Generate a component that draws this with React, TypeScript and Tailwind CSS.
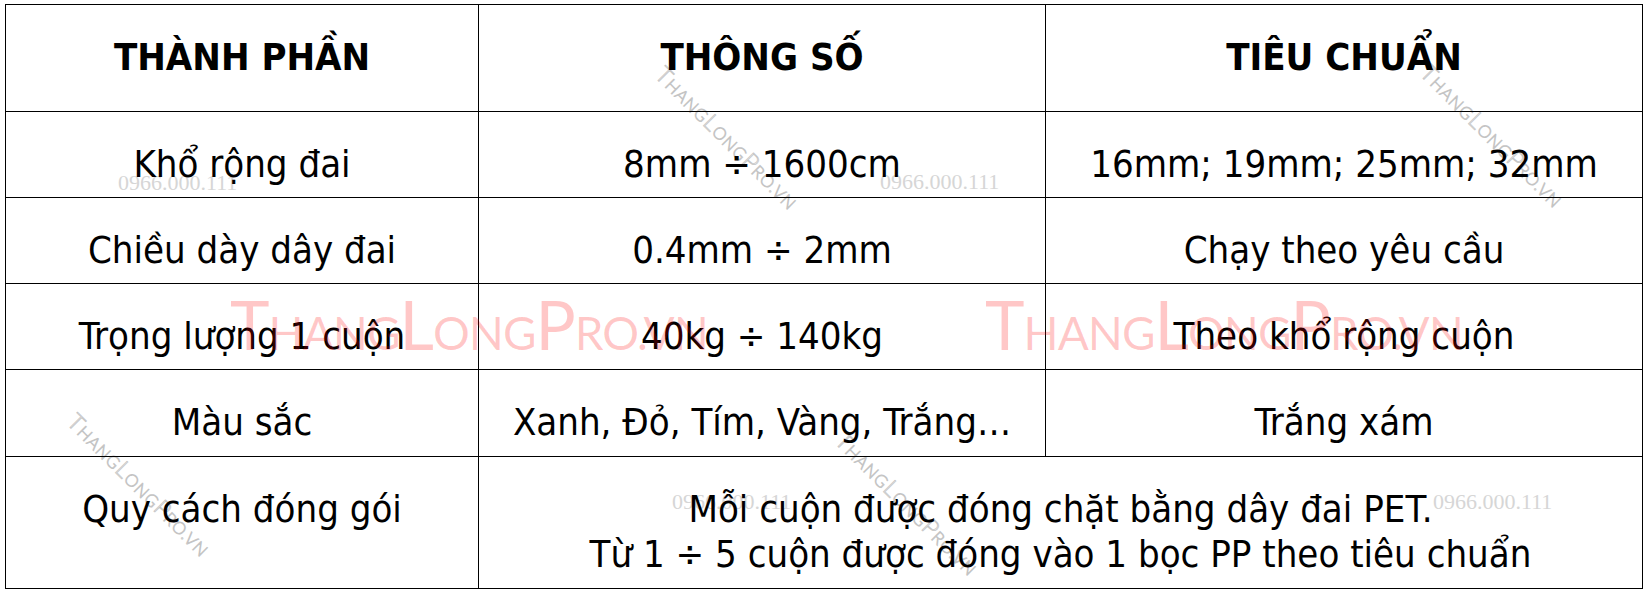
const body = { fontFamily: '"DejaVu Sans Condensed", "DejaVu Sans", sans-serif' }
const mark = { fontFamily: 'Lato, "Open Sans", sans-serif' }
const serif = { fontFamily: '"Liberation Serif", serif' }

const rows = [
  ['Khổ rộng đai', '8mm ÷ 1600cm', '16mm; 19mm; 25mm; 32mm'],
  ['Chiều dày dây đai', '0.4mm ÷ 2mm', 'Chạy theo yêu cầu'],
  ['Trọng lượng 1 cuộn', '40kg ÷ 140kg', 'Theo khổ rộng cuộn'],
  ['Màu sắc', 'Xanh, Đỏ, Tím, Vàng, Trắng…', 'Trắng xám'],
]

const cell = 'border border-black align-top pt-[30px] text-center leading-[45px] whitespace-nowrap'

function BrandMark() {
  return (
    <>
      <span className="text-[67px]">T</span>
      <span className="text-[46px]">HANG</span>
      <span className="text-[67px]">L</span>
      <span className="text-[46px]">ONG</span>
      <span className="text-[67px]">P</span>
      <span className="text-[46px]">RO.VN</span>
    </>
  )
}

function SmallMark() {
  return (
    <>
      <span className="text-[23px]">T</span>
      <span className="text-[17px]">HANG</span>
      <span className="text-[23px]">L</span>
      <span className="text-[17px]">ONG</span>
      <span className="text-[23px]">P</span>
      <span className="text-[17px]">RO.VN</span>
    </>
  )
}

const phones = [
  'left-[113px] top-[168px]',
  'left-[875px] top-[167px]',
  'left-[667px] top-[487px]',
  'left-[1428px] top-[487px]',
]

const diagonals = [
  'left-[663px] top-[58px]',
  'left-[1428px] top-[56px]',
  'left-[75px] top-[405px]',
  'left-[843px] top-[424px]',
]

export default function App() {
  return (
    <div className="min-h-[590px] bg-white pl-[5px] pt-[4px]">
      <div className="relative w-[1637px]">
        {phones.map((p) => (
          <div
            key={p}
            className={`absolute ${p} text-[22px] leading-none text-[#d6d6d6]`}
            style={serif}
          >
            0966.000.111
          </div>
        ))}
        {diagonals.map((p) => (
          <div
            key={p}
            className={`absolute ${p} origin-top-left rotate-[45deg] whitespace-nowrap leading-none font-light tracking-[1px] text-transparent [-webkit-text-stroke:0.8px_#c4c4c4]`}
            style={mark}
          >
            <SmallMark />
          </div>
        ))}

        <table className="relative w-[1637px] table-fixed border-collapse text-[38px] text-black" style={body}>
          <colgroup>
            <col className="w-[473px]" />
            <col className="w-[567px]" />
            <col className="w-[597px]" />
          </colgroup>
          <thead>
            <tr className="h-[107px]">
              <th className={`${cell} font-bold`}>THÀNH PHẦN</th>
              <th className={`${cell} font-bold`}>THÔNG SỐ</th>
              <th className={`${cell} font-bold`}>TIÊU CHUẨN</th>
            </tr>
          </thead>
          <tbody>
            {rows.map((r, i) => (
              <tr key={r[0]} className={i === 3 ? 'h-[87px]' : 'h-[86px]'}>
                {r.map((t) => (
                  <td key={t} className={`${cell} font-normal`}>
                    {t}
                  </td>
                ))}
              </tr>
            ))}
            <tr className="h-[132px]">
              <td className={cell}>Quy cách đóng gói</td>
              <td colSpan={2} className={cell}>
                Mỗi cuộn được đóng chặt bằng dây đai PET.
                <br />
                Từ 1 ÷ 5 cuộn được đóng vào 1 bọc PP theo tiêu chuẩn
              </td>
            </tr>
          </tbody>
        </table>

        <div
          className="absolute left-[225px] top-[287px] whitespace-nowrap leading-none font-normal tracking-[-1px] text-[rgba(255,0,0,0.22)]"
          style={mark}
        >
          <BrandMark />
        </div>
        <div
          className="absolute left-[980px] top-[287px] whitespace-nowrap leading-none font-normal tracking-[-1px] text-[rgba(255,0,0,0.22)]"
          style={mark}
        >
          <BrandMark />
        </div>
      </div>
    </div>
  )
}
